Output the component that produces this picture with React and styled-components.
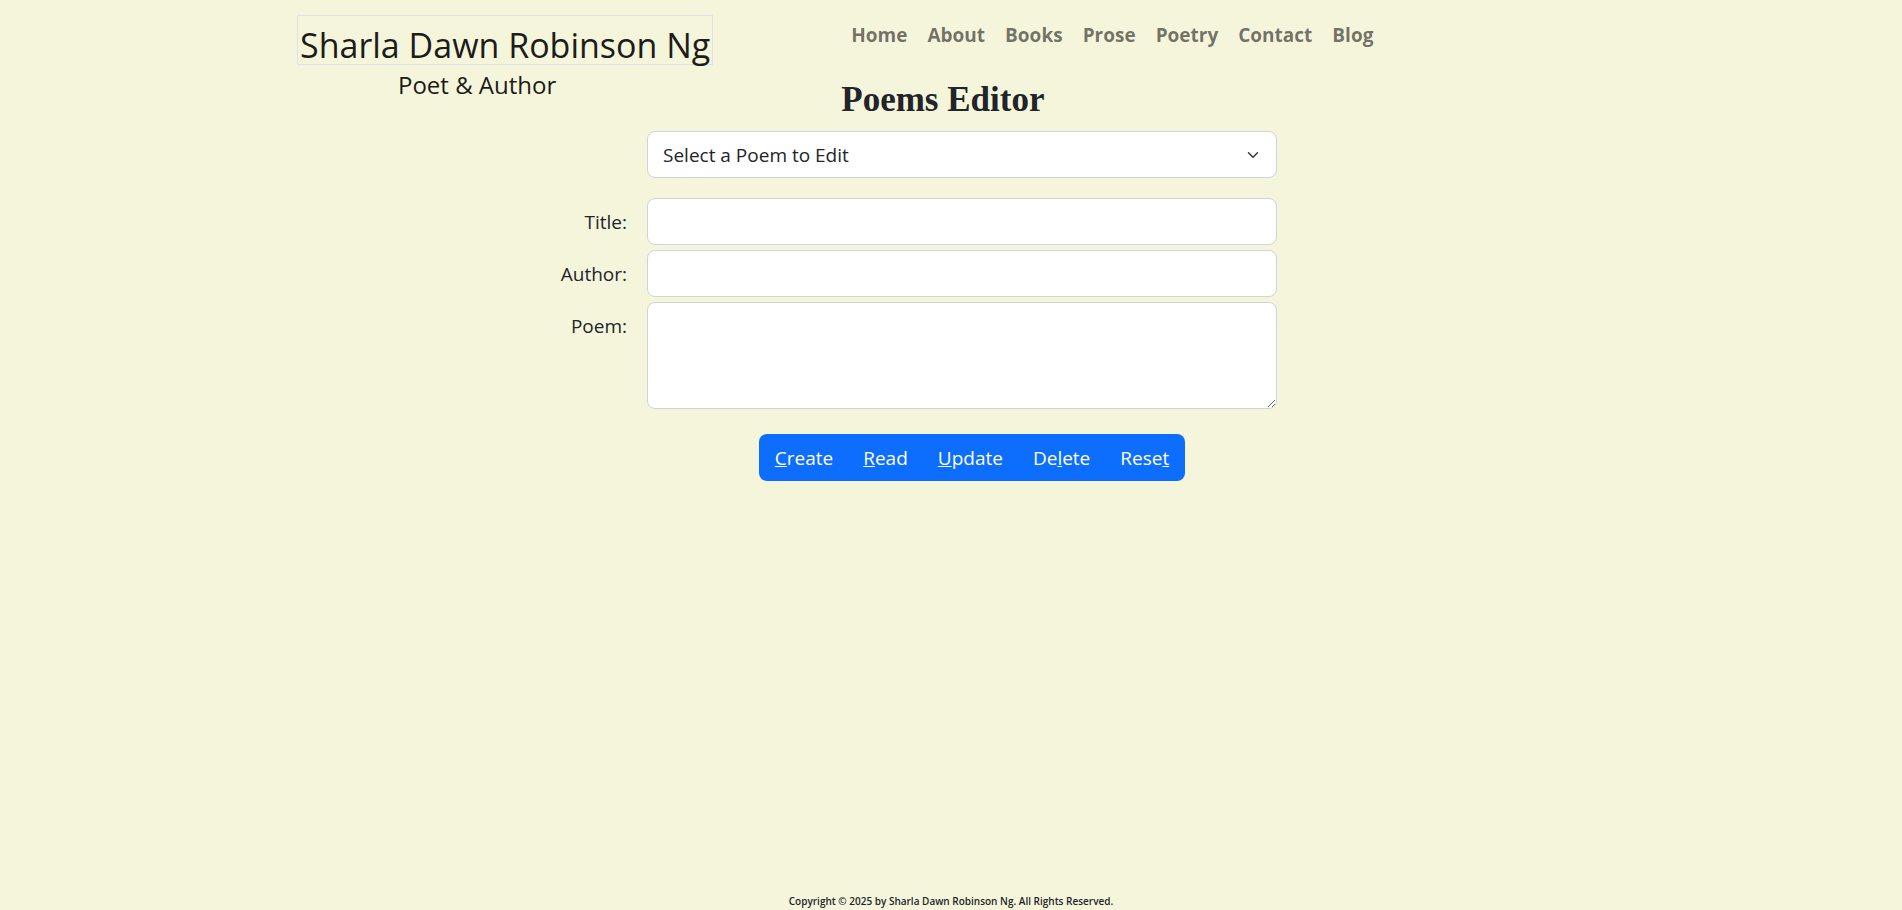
import React from "react";
import styled, { createGlobalStyle } from "styled-components";

const GlobalStyle = createGlobalStyle`
  *, *::before, *::after { box-sizing: border-box; }
  body {
    margin: 0;
    background: #f5f5dc;
    color: #212529;
    font-family: "Segoe UI", "Open Sans", "Noto Sans", sans-serif;
    font-size: 19px;
    line-height: 29px;
  }
`;

const Page = styled.div`
  display: flex;
  flex-direction: column;
  min-height: 100vh;
`;

const Container = styled.div`
  width: 100%;
  max-width: 1332px;
  margin: 0 auto;
  padding: 0 12px;
`;

const Header = styled.header`
  display: flex;
  flex-wrap: wrap;
  column-gap: 128px;
  padding-top: 15px;
  margin-bottom: 11px;
`;

const Brand = styled.div`
  display: flex;
  flex-direction: column;
  color: #1c1c19;
`;

const BrandName = styled.a`
  height: 50px;
  padding: 0 2px;
  border: 1px solid #dee2e6;
  color: inherit;
  font-size: 34px;
  line-height: 58px;
  text-decoration: none;
  white-space: nowrap;
`;

const Tagline = styled.p`
  margin: 0;
  padding: 2px 56px 0 0;
  font-size: 24px;
  line-height: 36px;
  text-align: center;
`;

const HeaderMain = styled.div`
  display: flex;
  flex-direction: column;
  gap: 25px;
`;

const Nav = styled.nav`
  display: flex;
  flex-wrap: wrap;
  padding: 5px 0;
`;

const NavLink = styled.a`
  padding: 0 10px;
  color: rgba(0, 0, 0, 0.55);
  font-weight: 700;
  font-size: 19px;
  line-height: 30px;
  text-decoration: none;
`;

const Heading = styled.h1`
  margin: 0;
  font-family: "Times New Roman", "Liberation Serif", serif;
  font-size: 35px;
  line-height: 40px;
  font-weight: 700;
`;

const Form = styled.form`
  display: flex;
  flex-direction: column;
  gap: 5px;
`;

const Row = styled.div`
  display: grid;
  grid-template-columns: 330fr 630fr 308fr;
  column-gap: 20px;
  margin-bottom: ${(p) => (p.$spaced ? "15px" : "0")};
`;

const Label = styled.label`
  padding-top: 10px;
  text-align: right;
`;

const Field = styled.div`
  grid-column: 2;
  position: relative;
  display: flex;
`;

const Input = styled.input`
  width: 100%;
  height: 47px;
  padding: 8px 16px;
  border: 1px solid #ced4da;
  border-radius: 8px;
  background: #fff;
  color: inherit;
  font: inherit;
`;

const Select = styled(Input).attrs({ as: "select" })`
  appearance: none;
  padding: 9px 48px 7px 15px;
`;

const TextArea = styled(Input).attrs({ as: "textarea" })`
  height: 107px;
  resize: vertical;
`;

const Chevron = styled.svg`
  position: absolute;
  top: 18px;
  right: 18px;
  pointer-events: none;
`;

const Actions = styled.div`
  grid-column: 2;
  justify-self: center;
  display: flex;
  margin: 20px 0 0 20px;
  padding: 0 1px;
  border-radius: 8px;
  background: #0d6efd;
`;

const ActionButton = styled.button`
  height: 47px;
  padding: 2px 15px 0;
  border: 0;
  background: transparent;
  color: #fff;
  font: inherit;
  cursor: pointer;
`;

const Footer = styled.footer`
  margin-top: auto;
  font-size: 10px;
  line-height: 18px;
  font-weight: 600;
  text-align: center;
`;

const links = ["Home", "About", "Books", "Prose", "Poetry", "Contact", "Blog"];

const actions = [
  ["", "C", "reate"],
  ["", "R", "ead"],
  ["", "U", "pdate"],
  ["De", "l", "ete"],
  ["Rese", "t", ""],
];

export default function App() {
  return (
    <Page>
      <GlobalStyle />
      <Container>
        <Header>
          <Brand>
            <BrandName href="#home">Sharla Dawn Robinson Ng</BrandName>
            <Tagline>Poet &amp; Author</Tagline>
          </Brand>
          <HeaderMain>
            <Nav>
              {links.map((name) => (
                <NavLink key={name} href={`#${name.toLowerCase()}`}>{name}</NavLink>
              ))}
            </Nav>
            <Heading>Poems Editor</Heading>
          </HeaderMain>
        </Header>
        <Form onSubmit={(e) => e.preventDefault()}>
          <Row $spaced>
            <Field>
              <Select aria-label="Select a Poem to Edit">
                <option>Select a Poem to Edit</option>
              </Select>
              <Chevron width="12" height="12" viewBox="0 0 16 16" aria-hidden="true">
                <path d="m2 5 6 6 6-6" fill="none" stroke="#343a40" strokeWidth="2" strokeLinecap="round" strokeLinejoin="round" />
              </Chevron>
            </Field>
          </Row>
          <Row>
            <Label htmlFor="title">Title:</Label>
            <Field><Input id="title" type="text" /></Field>
          </Row>
          <Row>
            <Label htmlFor="author">Author:</Label>
            <Field><Input id="author" type="text" /></Field>
          </Row>
          <Row>
            <Label htmlFor="poem">Poem:</Label>
            <Field><TextArea id="poem" /></Field>
          </Row>
          <Row>
            <Actions role="group" aria-label="Poem actions">
              {actions.map(([before, key, after]) => (
                <ActionButton key={before + key + after} type="button" accessKey={key.toLowerCase()}>
                  {before}<u>{key}</u>{after}
                </ActionButton>
              ))}
            </Actions>
          </Row>
        </Form>
      </Container>
      <Footer>Copyright © 2025 by Sharla Dawn Robinson Ng. All Rights Reserved.</Footer>
    </Page>
  );
}
